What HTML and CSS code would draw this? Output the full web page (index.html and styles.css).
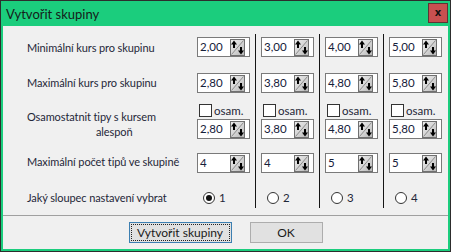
FILE: index.html
```html
<!DOCTYPE html>
<html lang="cs">
<head>
<meta charset="utf-8">
<title>Vytvořit skupiny</title>
<link rel="stylesheet" href="styles.css">
</head>
<body>
<div class="window">
  <div class="titlebar">
    <span class="title">Vytvořit skupiny</span>
    <span class="close">x</span>
  </div>
  <div class="content">
    <div class="grid">
      <div class="lbl r1">Minimální kurs pro skupinu</div>
      <div class="col r1"><div class="spin"><span class="val">2,00</span><svg class="sp" viewBox="0 0 15 17"><use href="#spinicon"/></svg></div></div>
      <div class="col sep r1"><div class="spin"><span class="val">3,00</span><svg class="sp" viewBox="0 0 15 17"><use href="#spinicon"/></svg></div></div>
      <div class="col sep r1"><div class="spin"><span class="val">4,00</span><svg class="sp" viewBox="0 0 15 17"><use href="#spinicon"/></svg></div></div>
      <div class="col sep r1"><div class="spin"><span class="val">5,00</span><svg class="sp" viewBox="0 0 15 17"><use href="#spinicon"/></svg></div></div>

      <div class="lbl r2">Maximální kurs pro skupinu</div>
      <div class="col r2"><div class="spin"><span class="val">2,80</span><svg class="sp" viewBox="0 0 15 17"><use href="#spinicon"/></svg></div></div>
      <div class="col sep r2"><div class="spin"><span class="val">3,80</span><svg class="sp" viewBox="0 0 15 17"><use href="#spinicon"/></svg></div></div>
      <div class="col sep r2"><div class="spin"><span class="val">4,80</span><svg class="sp" viewBox="0 0 15 17"><use href="#spinicon"/></svg></div></div>
      <div class="col sep r2"><div class="spin"><span class="val">5,80</span><svg class="sp" viewBox="0 0 15 17"><use href="#spinicon"/></svg></div></div>

      <div class="lbl r3"><span class="l1">Osamostatnit tipy s kursem</span><span class="l2">alespoň</span></div>
      <div class="col r3"><label class="check"><span class="cb"></span>osam.</label><div class="spin"><span class="val">2,80</span><svg class="sp" viewBox="0 0 15 17"><use href="#spinicon"/></svg></div></div>
      <div class="col sep r3"><label class="check"><span class="cb"></span>osam.</label><div class="spin"><span class="val">3,80</span><svg class="sp" viewBox="0 0 15 17"><use href="#spinicon"/></svg></div></div>
      <div class="col sep r3"><label class="check"><span class="cb"></span>osam.</label><div class="spin"><span class="val">4,80</span><svg class="sp" viewBox="0 0 15 17"><use href="#spinicon"/></svg></div></div>
      <div class="col sep r3"><label class="check"><span class="cb"></span>osam.</label><div class="spin"><span class="val">5,80</span><svg class="sp" viewBox="0 0 15 17"><use href="#spinicon"/></svg></div></div>

      <div class="lbl r4">Maximální počet tipů ve skupině</div>
      <div class="col r4"><div class="spin"><span class="val">4</span><svg class="sp" viewBox="0 0 15 17"><use href="#spinicon"/></svg></div></div>
      <div class="col sep r4"><div class="spin"><span class="val">4</span><svg class="sp" viewBox="0 0 15 17"><use href="#spinicon"/></svg></div></div>
      <div class="col sep r4"><div class="spin"><span class="val">5</span><svg class="sp" viewBox="0 0 15 17"><use href="#spinicon"/></svg></div></div>
      <div class="col sep r4"><div class="spin"><span class="val">5</span><svg class="sp" viewBox="0 0 15 17"><use href="#spinicon"/></svg></div></div>

      <div class="lbl r5">Jaký sloupec nastavení vybrat</div>
      <div class="col r5"><label class="radio"><span class="rb on"></span>1</label></div>
      <div class="col sep r5"><label class="radio"><span class="rb"></span>2</label></div>
      <div class="col sep r5"><label class="radio"><span class="rb"></span>3</label></div>
      <div class="col sep r5"><label class="radio"><span class="rb"></span>4</label></div>
    </div>
    <div class="hline"></div>
    <div class="buttons">
      <button class="btn default"><span class="focus">Vytvořit skupiny</span></button>
      <button class="btn ok">OK</button>
    </div>
  </div>
</div>
<svg width="0" height="0" class="defs">
  <defs>
    <linearGradient id="spg" x1="0" y1="0" x2="1" y2="1">
      <stop offset="0" stop-color="#ececec"/>
      <stop offset="0.5" stop-color="#d6d6d6"/>
      <stop offset="1" stop-color="#b4b4b4"/>
    </linearGradient>
    <g id="spinicon">
      <rect x="0.5" y="0.5" width="14" height="16" fill="url(#spg)" stroke="#707070"/>
      <line x1="1.5" y1="15.5" x2="13.5" y2="1.5" stroke="#8c8c8c" stroke-width="1"/>
      <path d="M4 1.5 L7 5.5 L5 5.5 L5 9 L3 9 L3 5.5 L1 5.5 Z" fill="#000"/>
      <path d="M11 15.5 L14 11.5 L12 11.5 L12 8 L10 8 L10 11.5 L8 11.5 Z" fill="#000"/>
    </g>
  </defs>
</svg>
</body>
</html>
```
FILE: styles.css
```css
html, body {
  margin: 0;
  padding: 0;
  background: #ffffff;
}
body {
  font-family: Lato, "Noto Sans", sans-serif;
  font-size: 11.5px;
  color: #1f2738;
}
.defs {
  position: absolute;
  width: 0;
  height: 0;
}
.window {
  width: 451px;
  height: 252px;
  box-sizing: border-box;
  border: 1px solid #2d2d2d;
  background: #1bcd7d;
  padding: 0 2px 2px 2px;
  display: flex;
  flex-direction: column;
}
.titlebar {
  height: 25px;
  display: flex;
  align-items: flex-start;
  justify-content: space-between;
}
.title {
  font-size: 13px;
  color: #15201a;
  padding-left: 3px;
  line-height: 16px;
  margin-top: 5px;
}
.close {
  width: 20px;
  height: 20px;
  box-sizing: border-box;
  margin-top: 2px;
  background: #c75050;
  border: 1px solid #5d3434;
  color: #111;
  font-weight: bold;
  font-size: 10px;
  line-height: 17px;
  text-align: center;
  font-family: "DejaVu Sans", sans-serif;
}
.content {
  flex: 1;
  background: #f0f0f0;
  display: flex;
  flex-direction: column;
}
.grid {
  margin-top: 8px;
  display: grid;
  grid-template-columns: 188px repeat(4, 64px);
  grid-template-rows: 30px 34px 46px 36px 28px;
}
.lbl {
  padding-left: 24px;
  line-height: 15px;
  white-space: nowrap;
  font-size: 11px;
  letter-spacing: -0.1px;
}
.lbl.r1 { padding-top: 6px; }
.lbl.r2 { padding-top: 11px; }
.lbl.r3 { padding-top: 11px; }
.lbl.r4 { padding-top: 10px; }
.lbl.r5 { padding-top: 10px; }
.l1, .l2 { display: block; }
.l2 { padding-left: 69px; }
.col {
  border-left: 1px solid transparent;
  padding-left: 5px;
  display: flex;
  flex-direction: column;
}
.col.sep { border-left-color: #151515; }
.col.r1 { padding-top: 3px; }
.col.r2 { padding-top: 9px; }
.col.r3 { padding-top: 6px; }
.col.r4 { padding-top: 9px; }
.col.r5 { padding-top: 11px; }
.spin {
  width: 53px;
  height: 20px;
  box-sizing: border-box;
  border: 1px solid #7a7a7a;
  background: #fff;
  display: flex;
  align-items: center;
  justify-content: space-between;
  padding: 0 4px 0 2px;
}
.val {
  color: #15203a;
  line-height: 16px;
}
.sp {
  width: 15px;
  height: 17px;
  display: block;
}
.check {
  display: flex;
  align-items: center;
  height: 13px;
  gap: 2px;
  margin-left: 2px;
  margin-bottom: 2px;
  line-height: 13px;
}
.cb {
  width: 13px;
  height: 13px;
  box-sizing: border-box;
  border: 1px solid #333;
  background: #fff;
}
.radio {
  display: flex;
  align-items: center;
  gap: 4px;
  margin-left: 6px;
  line-height: 13px;
}
.rb {
  width: 12px;
  height: 12px;
  box-sizing: border-box;
  border: 1px solid #333;
  border-radius: 50%;
  background: #fff;
  display: flex;
  align-items: center;
  justify-content: center;
}
.rb.on::after {
  content: "";
  width: 6px;
  height: 6px;
  border-radius: 50%;
  background: #111;
}
.hline {
  margin-top: 7px;
  height: 1px;
  background: #a0a0a0;
}
.buttons {
  display: flex;
  justify-content: center;
  gap: 18px;
  margin-top: 6px;
}
.btn {
  height: 21px;
  box-sizing: border-box;
  background: #e1e1e1;
  border: 1px solid #adadad;
  font-family: Lato, "Noto Sans", sans-serif;
  font-size: 12px;
  color: #1a1a1a;
  padding: 0;
  line-height: 17px;
}
.btn.default {
  width: 103px;
  border-color: #3c7fb1;
  padding: 1px;
}
.focus {
  display: block;
  height: 17px;
  border: 1px dotted #222;
  box-sizing: border-box;
  line-height: 15px;
}
.btn.ok {
  width: 73px;
}
```
